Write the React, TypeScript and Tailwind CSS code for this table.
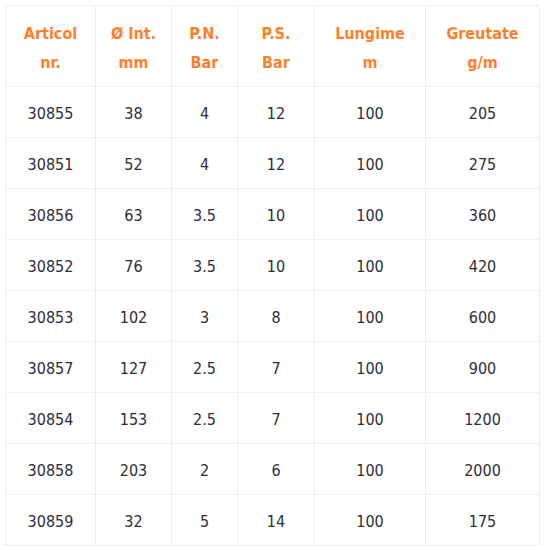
import React from 'react';

const rows = [
  ['30855', '38', '4', '12', '100', '205'],
  ['30851', '52', '4', '12', '100', '275'],
  ['30856', '63', '3.5', '10', '100', '360'],
  ['30852', '76', '3.5', '10', '100', '420'],
  ['30853', '102', '3', '8', '100', '600'],
  ['30857', '127', '2.5', '7', '100', '900'],
  ['30854', '153', '2.5', '7', '100', '1200'],
  ['30858', '203', '2', '6', '100', '2000'],
  ['30859', '32', '5', '14', '100', '175'],
];

const headers = [
  ['Articol', 'nr.'],
  ['Ø Int.', 'mm'],
  ['P.N.', 'Bar'],
  ['P.S.', 'Bar'],
  ['Lungime', 'm'],
  ['Greutate', 'g/m'],
];

const widths = ['w-[90px]', 'w-[76px]', 'w-[66px]', 'w-[77px]', 'w-[111px]', 'w-[114px]'];

export default function App() {
  return (
    <div className="bg-white p-[5px] font-['DejaVu_Sans',sans-serif] [font-stretch:condensed]">
      <table className="w-[534px] table-fixed border-collapse text-center">
        <thead>
          <tr className="h-[81px]">
            {headers.map((h, i) => (
              <th
                key={i}
                className={`${widths[i]} border border-[#eeeeee] pt-[4px] text-[16px] leading-[29px] font-bold text-[#ff7f2a]`}
              >
                {h[0]}
                <br />
                {h[1]}
              </th>
            ))}
          </tr>
        </thead>
        <tbody>
          {rows.map((r, i) => (
            <tr key={i} className="h-[51px]">
              {r.map((c, j) => (
                <td key={j} className="border border-[#eeeeee] pt-[3px] text-[16px] text-[#2d2d3a]">
                  {c}
                </td>
              ))}
            </tr>
          ))}
        </tbody>
      </table>
    </div>
  );
}
